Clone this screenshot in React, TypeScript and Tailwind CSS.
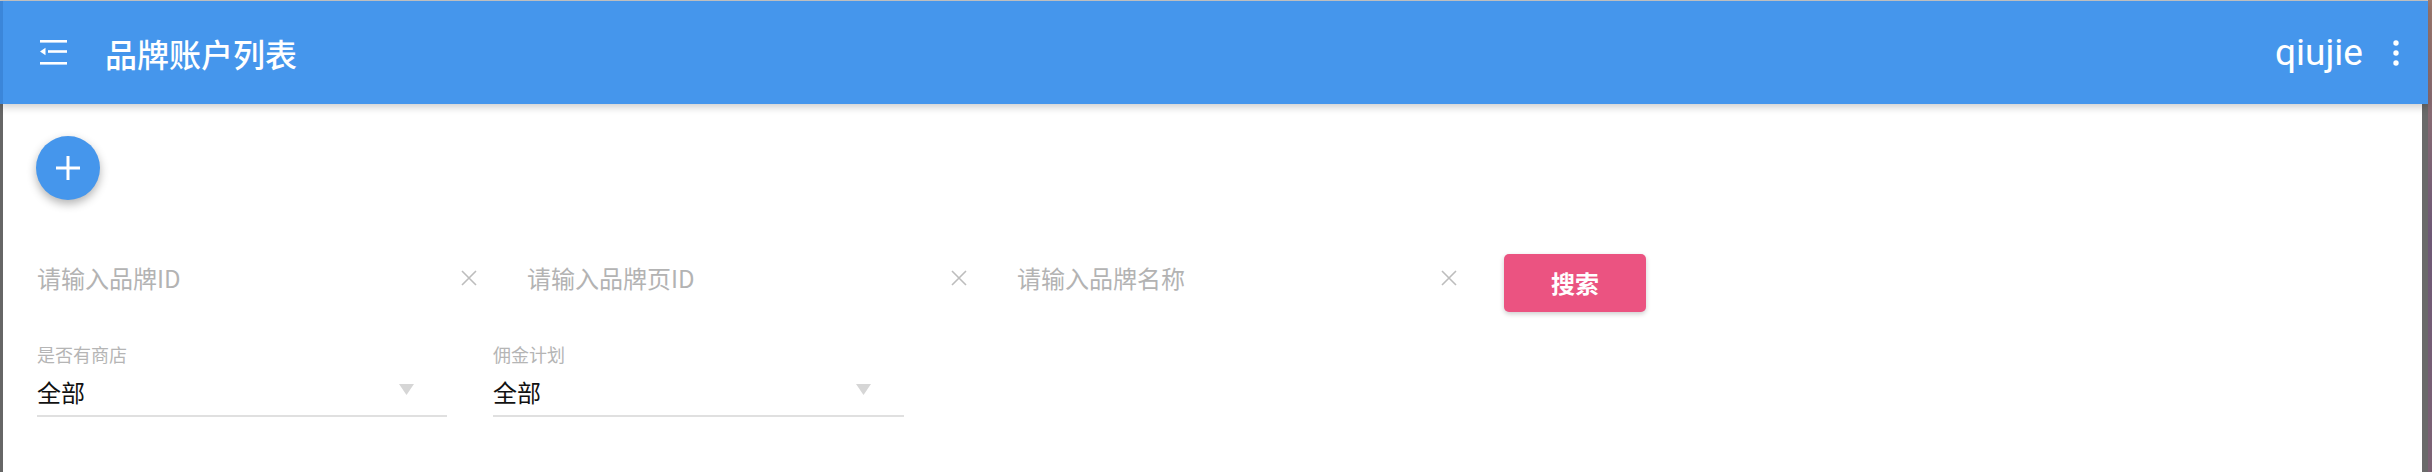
import React from "react";

const cjk = '"Noto Sans CJK SC", "Noto Sans", sans-serif';

function ClearIcon() {
  return (
    <svg width="16" height="16" viewBox="0 0 16 16" className="shrink-0">
      <path d="M1 1L15 15M15 1L1 15" stroke="#bdbdbd" strokeWidth="1.6" fill="none" />
    </svg>
  );
}

function SearchInput({ placeholder }: { placeholder: string }) {
  return (
    <div className="flex h-[48px] w-[440px] items-center justify-between">
      <span className="text-[24px] leading-[32px] text-[#b3b3b3]">{placeholder}</span>
      <ClearIcon />
    </div>
  );
}

function SelectField({ label, value, width }: { label: string; value: string; width: string }) {
  return (
    <div className={`flex flex-col ${width}`}>
      <span className="text-[18px] leading-[20px] text-[#b5b5b5]">{label}</span>
      <div className="mt-[12px] flex items-center justify-between border-b-2 border-[#e0e0e0] pb-[7px]">
        <span className="text-[24px] leading-[32px] text-[#111111]">{value}</span>
        <svg width="15" height="11" viewBox="0 0 15 11" className="mb-[6px] mr-[33px]">
          <path d="M0 0H15L7.5 11Z" fill="#d6d6d6" />
        </svg>
      </div>
    </div>
  );
}

export default function App() {
  return (
    <div className="flex h-[472px] w-[2432px] overflow-hidden bg-white" style={{ fontFamily: cjk }}>
      <div className="flex flex-1 flex-col">
        <div className="h-px bg-[#c6c6c6]" />
        <header className="relative z-10 flex h-[103px] shrink-0 items-center border-l-[3px] border-[#3b86d9] bg-[#4596ec] shadow-[0_3px_8px_rgba(0,0,0,0.2)]">
          <svg width="27" height="25" viewBox="0 0 27 25" className="ml-[37px] shrink-0">
            <rect x="0" y="0" width="27" height="2.6" fill="#fff" />
            <path d="M0 11.5L5.5 7.8V15.2Z" fill="#fff" />
            <rect x="8" y="10.2" width="19" height="2.6" fill="#fff" />
            <rect x="0" y="22" width="27" height="2.6" fill="#fff" />
          </svg>
          <h1 className="ml-[38px] text-[32px] font-medium leading-none text-white">品牌账户列表</h1>
          <div className="flex-1" />
          <span className="text-[37px] leading-none text-white" style={{ fontFamily: 'Roboto, "Noto Sans", sans-serif' }}>
            qiujie
          </span>
          <svg width="6" height="26" viewBox="0 0 6 26" className="ml-[30px] mr-[29px] shrink-0">
            <circle cx="3" cy="3" r="2.7" fill="#fff" />
            <circle cx="3" cy="13" r="2.7" fill="#fff" />
            <circle cx="3" cy="23" r="2.7" fill="#fff" />
          </svg>
        </header>
        <div className="flex flex-1">
          <div className="w-[3px] bg-[#666666]" />
          <main className="flex flex-1 flex-col bg-white pl-[34px] pt-[32px]">
            <button className="-ml-px flex h-[64px] w-[64px] items-center justify-center rounded-full bg-[#4596ec] shadow-[0_4px_10px_rgba(0,0,0,0.3)]">
              <svg width="24" height="24" viewBox="0 0 24 24">
                <path d="M12 0V24M0 12H24" stroke="#fff" strokeWidth="3" fill="none" />
              </svg>
            </button>
            <div className="mt-[54px] flex items-start">
              <SearchInput placeholder="请输入品牌ID" />
              <div className="ml-[50px]">
                <SearchInput placeholder="请输入品牌页ID" />
              </div>
              <div className="ml-[50px]">
                <SearchInput placeholder="请输入品牌名称" />
              </div>
              <button className="ml-[47px] flex h-[58px] w-[142px] items-center justify-center rounded-[5px] bg-[#eb5381] text-[24px] font-bold text-white shadow-[0_2px_5px_rgba(0,0,0,0.2)]">
                搜索
              </button>
            </div>
            <div className="mt-[32px] flex items-start gap-[46px]">
              <SelectField label="是否有商店" value="全部" width="w-[410px]" />
              <SelectField label="佣金计划" value="全部" width="w-[411px]" />
            </div>
          </main>
          <div className="w-[6px] bg-[#6a6a6a]" />
        </div>
      </div>
      <div className="w-[4px] bg-gradient-to-b from-[#a07a6e] via-[#6e5876] to-[#7d6274]" />
    </div>
  );
}
